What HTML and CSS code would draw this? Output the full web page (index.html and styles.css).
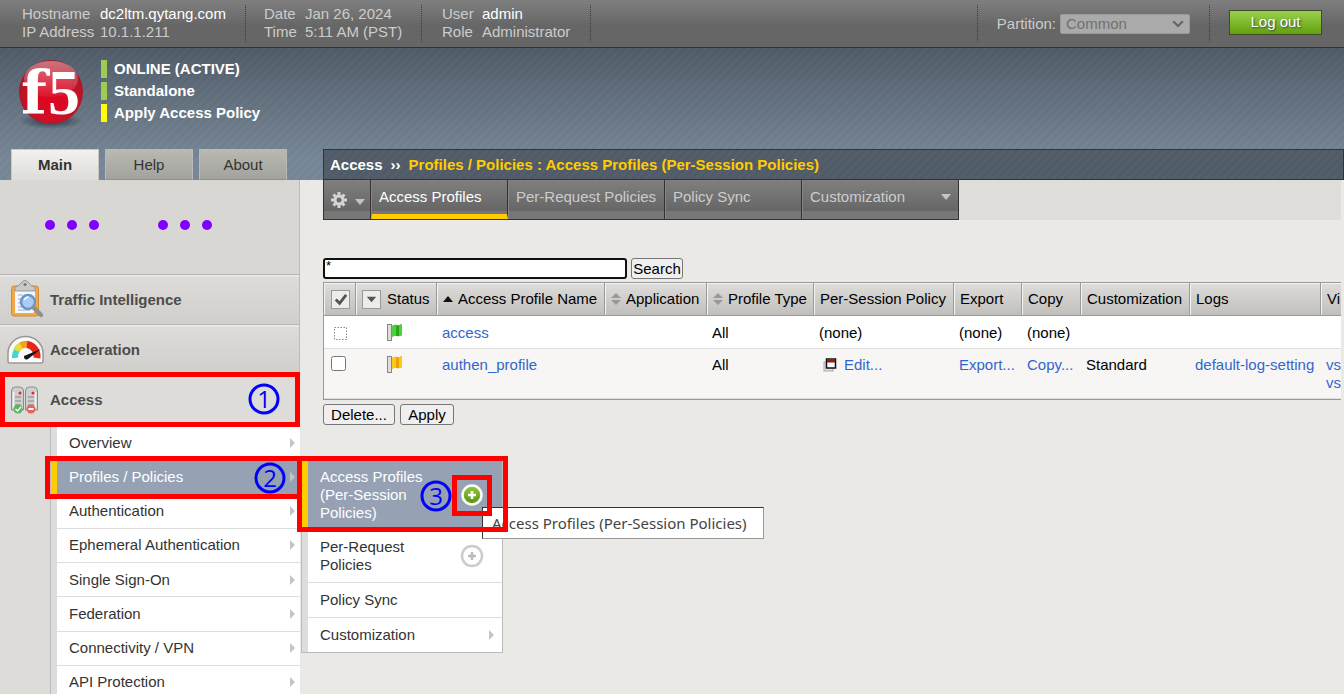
FILE: index.html
```html
<!DOCTYPE html>
<html lang="en">
<head>
<meta charset="utf-8">
<title>BIG-IP - Access Profiles</title>
<link rel="stylesheet" href="styles.css">
</head>
<body>
<header class="topbar">
  <dl class="facts facts-host">
    <dt>Hostname</dt><dd class="bright">dc2ltm.qytang.com</dd>
    <dt>IP Address</dt><dd>10.1.1.211</dd>
  </dl>
  <dl class="facts facts-date">
    <dt>Date</dt><dd>Jan 26, 2024</dd>
    <dt>Time</dt><dd>5:11 AM (PST)</dd>
  </dl>
  <dl class="facts facts-user">
    <dt>User</dt><dd class="bright">admin</dd>
    <dt>Role</dt><dd>Administrator</dd>
  </dl>
  <div class="partition">
    <label for="partition">Partition:</label>
    <span class="select-wrap">
      <select id="partition" disabled><option>Common</option></select>
      <svg class="chevron" width="12" height="8" viewBox="0 0 12 8"><path d="M1.2 1.2 6 6l4.800-4.800" fill="none" stroke="#666" stroke-width="2.200"/></svg>
    </span>
  </div>
  <div class="session"><button type="button" class="logout">Log out</button></div>
</header>

<div class="banner">
  <div class="device">
    <svg class="logo" width="70" height="84" viewBox="0 -7 70 84" role="img" aria-label="F5">
      <defs>
        <radialGradient id="ball" cx="50%" cy="58%" r="56%">
          <stop offset="0" stop-color="#e0051f"/><stop offset=".6" stop-color="#d20f26"/><stop offset="1" stop-color="#a31a28"/>
        </radialGradient>
        <linearGradient id="shine" x1="0" y1="0" x2="0" y2="1">
          <stop offset="0" stop-color="#fff" stop-opacity=".4"/><stop offset="1" stop-color="#fff" stop-opacity="0.050"/>
        </linearGradient>
        <radialGradient id="shade"><stop offset="0" stop-color="#1e2935" stop-opacity=".85"/><stop offset="1" stop-color="#1e2935" stop-opacity="0"/></radialGradient>
      </defs>
      <ellipse cx="35" cy="64" rx="32" ry="8" fill="url(#shade)"/>
      <circle cx="35" cy="35" r="32" fill="url(#ball)"/>
      <ellipse cx="35" cy="22" rx="27" ry="18" fill="url(#shine)"/>
      <text x="5" y="57" class="logo-f">f</text>
      <text x="32" y="57" class="logo-5">5</text>
    </svg>
    <ul class="status">
      <li class="ok">ONLINE (ACTIVE)</li>
      <li class="ok">Standalone</li>
      <li class="warn">Apply Access Policy</li>
    </ul>
  </div>
  <div class="title-row">
    <nav class="side-tabs">
      <a href="#" class="current">Main</a><a href="#">Help</a><a href="#">About</a>
    </nav>
    <h1 class="crumbs"><span>Access</span><span>››</span><span class="where">Profiles / Policies : Access Profiles (Per-Session Policies)</span></h1>
  </div>
</div>

<div class="workspace">
  <aside class="sidebar">
    <div class="dots">
      <div class="trio"><i></i><i></i><i></i></div>
      <div class="trio"><i></i><i></i><i></i></div>
    </div>
    <a href="#" class="module">
      <svg width="44" height="44" viewBox="0 0 44 44">
        <rect x="5.500" y="8" width="27" height="30" rx="2.500" fill="#f0a848" stroke="#d18b33"/>
        <path d="M9 11h20v22l-2 2H9z" fill="#f5f8fc"/>
        <path d="M12 17h5M12 21h3M12 25h3M12 29h6M12 32h12" stroke="#b9c5d8" stroke-width="1.500"/>
        <path d="M9 13V9q5-1 6-4 4-5 8 0 1 3 6 4v4z" fill="#c9c9c9" stroke="#999"/>
        <circle cx="19" cy="6.500" r="1.500" fill="#777"/>
        <circle cx="22" cy="24" r="7" fill="#a9cdf5" stroke="#6e93c9" stroke-width="2.500"/>
        <path d="M18.500 22q1-3 4-3" stroke="#fff" stroke-width="1.500" fill="none"/>
        <path d="m28 30 7 7" stroke="#8f8f8f" stroke-width="4.500" stroke-linecap="round"/>
      </svg>
      <span>Traffic Intelligence</span>
    </a>
    <a href="#" class="module">
      <svg width="44" height="44" viewBox="0 0 44 44">
        <path d="M2 33V25a17.500 16.500 0 0 1 35 0v8q0 2-2 2H4q-2 0-2-2z" fill="#fafafa" stroke="#999" stroke-width="1.500"/>
        <path d="M9 30a10.500 11 0 0 1 3-9" stroke="#48d6cf" stroke-width="6" fill="none"/>
        <path d="M10.500 22.500a10.500 10.500 0 0 1 6-5.500" stroke="#e7dc3b" stroke-width="7" fill="none"/>
        <path d="M15 17.500a11 11 0 0 1 7-1" stroke="#f5a11c" stroke-width="7" fill="none"/>
        <path d="M21 16.500a11 12 0 0 1 10 13.500" stroke="#e8251b" stroke-width="7" fill="none"/>
        <path d="m18 28 17-7-13 10q-4 2-4-3z" fill="#151515"/>
      </svg>
      <span>Acceleration</span>
    </a>
    <div class="module-open">
      <a href="#" class="module module-access">
        <svg width="44" height="44" viewBox="0 0 44 44">
          <g stroke="#8b8b8b" fill="#cfcfcf">
            <path d="M5.500 32V13q0-4 4-4h4q4 0 4 4v19z"/><path d="M19.500 32V13q0-4 4-4h4q4 0 4 4v19z"/>
          </g>
          <path d="M7.500 14v16M29.500 14v16" stroke="#f3f3f3" stroke-width="1.500"/>
          <path d="M9 19h6M9 23h6M9 27h6M22 19h6M22 23h6M22 27h6" stroke="#888"/>
          <circle cx="14" cy="15" r="1.500" fill="#ec2525"/><circle cx="27" cy="15" r="1.500" fill="#ec2525"/>
          <circle cx="12" cy="31" r="4.500" fill="#56b65a"/><path d="m9.500 31 2 2 3.500-4" stroke="#fff" stroke-width="1.500" fill="none"/>
          <circle cx="25" cy="31" r="4.500" fill="#e76560"/><path d="M22.500 31h5" stroke="#fff" stroke-width="2"/>
        </svg>
        <span>Access</span>
      </a>
      <div class="mark mark-module"></div>
      <svg class="step step-one" width="32" height="32" viewBox="0 0 32 32"><circle cx="16" cy="16" r="14"/><text x="16" y="25">1</text></svg>
    </div>
    <ul class="submenu">
      <li><a href="#">Overview</a></li>
      <li class="active">
        <a href="#">Profiles / Policies</a>
        <div class="mark mark-item"></div>
        <svg class="step step-two" width="32" height="32" viewBox="0 0 32 32"><circle cx="16" cy="16" r="14"/><text x="16" y="25">2</text></svg>
        <div class="flyout">
          <ul>
            <li class="active"><a href="#">Access Profiles (Per-Session Policies)</a>
              <button type="button" class="add" aria-label="Create">
                <svg width="24" height="24" viewBox="0 0 24 24"><defs><linearGradient id="go" x1="0" y1="0" x2="0" y2="1"><stop offset="0" stop-color="#94c83d"/><stop offset="1" stop-color="#57930d"/></linearGradient></defs><circle cx="12" cy="12" r="9.500" fill="url(#go)" stroke="#fff" stroke-width="2.500"/><path d="M12 8v8M8 12h8" stroke="#fff" stroke-width="2.500"/></svg>
              </button>
            </li>
            <li><a href="#">Per-Request Policies</a>
              <button type="button" class="add" aria-label="Create">
                <svg width="24" height="24" viewBox="0 0 24 24"><circle cx="12" cy="12" r="10" fill="#fff" stroke="#ccc" stroke-width="2.500"/><path d="M12 8v8M8 12h8" stroke="#bbb" stroke-width="2.500"/></svg>
              </button>
            </li>
            <li><a href="#">Policy Sync</a></li>
            <li class="more"><a href="#">Customization</a></li>
          </ul>
          <div class="tooltip" role="tooltip">Access Profiles (Per-Session Policies)</div>
          <div class="mark mark-fly"></div>
          <div class="mark mark-add"></div>
          <svg class="step step-three" width="32" height="32" viewBox="0 0 32 32"><circle cx="16" cy="16" r="14"/><text x="16" y="25">3</text></svg>
        </div>
      </li>
      <li><a href="#">Authentication</a></li>
      <li><a href="#">Ephemeral Authentication</a></li>
      <li><a href="#">Single Sign-On</a></li>
      <li><a href="#">Federation</a></li>
      <li><a href="#">Connectivity / VPN</a></li>
      <li><a href="#">API Protection</a></li>
    </ul>
  </aside>

  <main class="content">
    <div class="tabstrip">
      <nav class="page-tabs">
        <button type="button" class="gear" aria-label="Preferences">
          <svg width="16" height="16" viewBox="0 0 16 16"><g stroke="#d4d4d4" stroke-width="3"><path d="M8 0v16M0 8h16M2.500 2.500l11 11M13.500 2.500l-11 11"/></g><circle cx="8" cy="8" r="5.500" fill="#d4d4d4"/><circle cx="8" cy="8" r="2.500" fill="#6c6c6c"/></svg>
          <svg width="10" height="6" viewBox="0 0 10 6"><path d="M0 0h10L5 6z" fill="#c4c4c4"/></svg>
        </button>
        <a href="#" class="current">Access Profiles</a>
        <a href="#" class="wide">Per-Request Policies</a>
        <a href="#">Policy Sync</a>
        <a href="#" class="wide drop">Customization
          <svg width="10" height="6" viewBox="0 0 10 6"><path d="M0 0h10L5 6z" fill="#c4c4c4"/></svg>
        </a>
      </nav>
    </div>

    <form class="search">
      <input type="text" value="*" aria-label="Search profiles">
      <button type="button">Search</button>
    </form>

    <div class="table-wrap">
      <table>
        <colgroup><col class="c-check"><col class="c-status"><col class="c-name"><col class="c-app"><col class="c-type"><col class="c-policy"><col class="c-export"><col class="c-copy"><col class="c-custom"><col class="c-logs"><col></colgroup>
        <thead>
          <tr>
            <th class="check"><button type="button" class="tile" aria-label="Select all"><svg width="18" height="18" viewBox="0 0 18 18"><path d="m4 9 4 4 7-9" fill="none" stroke="#555" stroke-width="3"/></svg></button></th>
            <th><div class="head"><button type="button" class="tile" aria-label="Filter status"><svg width="18" height="18" viewBox="0 0 18 18"><path d="M4 6h10l-5 6z" fill="#555"/></svg></button>Status</div></th>
            <th><div class="head sort"><svg width="10" height="6" viewBox="0 0 10 6"><path d="M0 6h10L5 0z" fill="#111"/></svg>Access Profile Name</div></th>
            <th><div class="head sort"><svg width="10" height="12" viewBox="0 0 10 12"><path d="M0 5h10L5 0zM0 7h10l-5 5z" fill="#999"/></svg>Application</div></th>
            <th><div class="head sort"><svg width="10" height="12" viewBox="0 0 10 12"><path d="M0 5h10L5 0zM0 7h10l-5 5z" fill="#999"/></svg>Profile Type</div></th>
            <th>Per-Session Policy</th><th>Export</th><th>Copy</th><th>Customization</th><th>Logs</th><th>Vi</th>
          </tr>
        </thead>
        <tbody>
          <tr>
            <td class="check"><svg width="13" height="13" viewBox="0 0 13 13"><rect x=".5" y=".5" width="12" height="12" fill="none" stroke="#888" stroke-dasharray="1.500 1.500"/></svg></td>
            <td class="flag"><svg width="16" height="18" viewBox="0 0 16 18"><rect x=".5" y=".5" width="4" height="16" fill="#ddd" stroke="#888"/><path d="M5 2q3-2 5-1t5-1v11q-3 2-5 1t-5 1z" fill="#27a818"/><path d="M5 2q3-2 4-1v11H5zM12 1l3-1v11l-3 1z" fill="#4cd23b"/></svg></td>
            <td><a href="#">access</a></td><td></td><td>All</td><td>(none)</td><td>(none)</td><td>(none)</td><td></td><td></td><td></td>
          </tr>
          <tr class="alt">
            <td class="check"><input type="checkbox" aria-label="Select authen_profile"></td>
            <td class="flag"><svg width="16" height="18" viewBox="0 0 16 18"><rect x=".5" y=".5" width="4" height="16" fill="#ddd" stroke="#888"/><path d="M5 2q3-2 5-1t5-1v11q-3 2-5 1t-5 1z" fill="#e9a300"/><path d="M5 2q3-2 4-1v11H5zM12 1l3-1v11l-3 1z" fill="#fcc91a"/></svg></td>
            <td><a href="#">authen_profile</a></td><td></td><td>All</td>
            <td><a href="#" class="edit"><svg width="14" height="14" viewBox="0 0 14 14"><rect x="1" y="4" width="9" height="9" fill="#ddd" stroke="#aaa"/><rect x="3.500" y="1" width="9" height="9" fill="#fff" stroke="#111" stroke-width="1.500"/><path d="M4 1.500h8v3H4z" fill="#8c2013"/></svg>Edit...</a></td>
            <td><a href="#">Export...</a></td><td><a href="#">Copy...</a></td><td>Standard</td><td><a href="#">default-log-setting</a></td><td><a href="#">vs</a><br><a href="#">vs</a></td>
          </tr>
        </tbody>
      </table>
    </div>
    <div class="actions"><button type="button" class="delete">Delete...</button><button type="button" class="apply">Apply</button></div>
  </main>
</div>
</body>
</html>
```
FILE: styles.css
```css
* { box-sizing: border-box; }
body {
  margin: 0;
  min-height: 100vh;
  display: flex;
  flex-direction: column;
  background: #eae9e5;
  color: #000;
  font: 15px/18px "Liberation Sans", Arial, sans-serif;
  overflow: hidden;
}
a { color: #3366cc; text-decoration: none; }
ul, dl, h1 { margin: 0; padding: 0; list-style: none; }
button, input, select { font: inherit; margin: 0; }
svg { display: block; flex: none; }

.topbar {
  display: flex;
  height: 48px;
  padding: 5px 22px;
  background: linear-gradient(#7f7f7f, #666 55%, #666);
  border-bottom: 1px solid #333;
  color: #ccc;
}
.facts {
  display: grid;
  align-content: start;
  border-right: 1px dotted #3c3c3c;
  white-space: nowrap;
}
.facts dd { margin: 0; }
.facts .bright { color: #fff; }
.facts-host { grid-template-columns: 78px 145px; }
.facts-date { grid-template-columns: 41px 116px; padding-left: 18px; }
.facts-user { grid-template-columns: 40px 108px; padding-left: 20px; }
.partition {
  display: flex;
  align-items: center;
  gap: 4px;
  margin-left: auto;
  padding: 0 19px;
  border: 1px dotted #3c3c3c;
  border-width: 0 1px;
}
.select-wrap { position: relative; }
.partition select {
  display: block;
  appearance: none;
  width: 130px;
  height: 20px;
  padding: 0 5px;
  border: 1px solid #999;
  border-radius: 2px;
  background: #aaa;
  color: #707070;
  opacity: 1;
}
.chevron { position: absolute; right: 6px; top: 6px; }
.session { padding: 5px 0 0 19px; }
.logout {
  width: 93px;
  height: 25px;
  padding: 0 0 2px;
  border: 1px solid #3f4b2c;
  background: linear-gradient(#9bcf4d, #62a10c);
  color: #fff;
  text-shadow: 1px 1px 2px #345;
}

.banner {
  background:
    repeating-linear-gradient(135deg, rgba(255,255,255,.015) 0 3px, rgba(0,0,0,.015) 3px 6px),
    linear-gradient(#505b68, #64717f 40%, #778797 85%, #778797);
}
.device { display: flex; height: 101px; padding: 2px 16px; }
.logo-f, .logo-5 { font-weight: bold; fill: #fff; }
.logo-f { font-family: "DejaVu Serif", serif; font-size: 60px; }
.logo-5 { font-family: "Liberation Serif", serif; font-size: 64px; }
.status { display: grid; align-content: start; gap: 4px; padding: 10px 0 0 15px; }
.status li { padding-left: 7px; border-left: 6px solid #9bcd55; color: #fff; font-weight: bold; }
.status .warn { border-color: #ff0; }

.title-row { display: grid; grid-template-columns: 323px 1fr; height: 31px; }
.side-tabs { display: flex; gap: 6px; padding-left: 11px; }
.side-tabs a {
  width: 88px;
  padding-top: 6px;
  border: 1px solid #bbbab5;
  border-bottom-color: #8e8e8a;
  background: linear-gradient(#b9b9b4, #a3a39e);
  color: #333;
  text-align: center;
}
.side-tabs .current { background: linear-gradient(#f1f1ee, #dddcd8); border-color: #c8c8c8; border-bottom: 0; font-weight: bold; }
.crumbs {
  display: flex;
  gap: 8px;
  height: 31px;
  padding: 6px;
  border: 1px solid #333;
  background: repeating-linear-gradient(135deg, rgba(255,255,255,.015) 0 3px, rgba(0,0,0,.015) 3px 6px), #515c69;
  color: #fff;
  font: bold 15px/18px "Liberation Sans", Arial, sans-serif;
  white-space: nowrap;
}
.crumbs .where { color: #fc0; }

.workspace { flex: 1; display: grid; grid-template-columns: 300px minmax(0, 1fr); }
.sidebar { background: #dddcd8; border-right: 1px solid #bbb; z-index: 1; }
.dots { display: flex; gap: 60px; height: 94px; padding: 40px 45px; background: #d8d7d3; }
.trio { display: flex; gap: 12px; }
.trio:first-child { margin-right: -1px; }
.trio i { width: 10px; height: 10px; border-radius: 50%; background: #8000ff; }
.module {
  display: flex;
  align-items: center;
  height: 50px;
  padding-left: 6px;
  border-top: 1px solid #b9b9bb;
  box-shadow: inset 0 2px #e7e6e4;
  background: linear-gradient(#dddcd8, #d0cfcb);
  color: #4c4c4c;
  font-weight: bold;
}
.module-open { position: relative; z-index: 1; }
.module-access { height: 52px; padding-bottom: 2px; background: #dddcd8; }

.submenu { display: grid; grid-auto-rows: 1fr; height: 274px; margin: 0 -1px 0 50px; border-left: 1px solid #bbb; }
.submenu > li { position: relative; border-left: 6px solid #ddd; border-bottom: 1px solid #ddd; background: #fff; }
.submenu > li > a { display: flex; align-items: center; height: 100%; padding-left: 12px; color: #333; }
.submenu > li > a::after, .flyout .more::after {
  content: "";
  margin: 0 5px 0 auto;
  border: 5px solid transparent;
  border-left-color: #c4c4c4;
  border-right: 0;
}
.submenu > .active { z-index: 2; border-left-color: #fc0; background: #96a2b4; border-bottom-color: #96a2b4; }
.submenu > .active > a { color: #fff; }

.flyout { position: absolute; left: 244px; top: 0; width: 202px; border: 1px solid #bbb; background: #fff; }
.flyout li { display: flex; align-items: center; min-height: 34px; padding: 8px 3px 8px 12px; border-left: 6px solid #ddd; border-bottom: 1px solid #ddd; }
.flyout li:last-child { border-bottom: 0; }
.flyout li a { width: 112px; color: #333; }
.flyout li .add { margin: 0 15px 0 auto; padding: 0; border: 0; background: none; }
.flyout li.active { padding-top: 7px; border-color: #fc0; border-bottom: 0; background: #96a2b4; }
.flyout li.active a { color: #fff; }

.tooltip {
  position: absolute;
  left: 180px;
  top: 46px;
  padding: 6px 16px 6px 9px;
  border: 1px solid #999;
  border-top-color: #333;
  border-left-color: #333;
  background: #fff;
  color: #444;
  font: 15px/18px "Noto Sans", sans-serif;
  white-space: nowrap;
}
.mark { position: absolute; border: 5px solid #f00; pointer-events: none; }
.mark-module { inset: -2px -1px -1px 0; }
.mark-item { inset: -4px -2px -5px -12px; }
.mark-fly { left: -5px; top: -5px; width: 211px; height: 76px; }
.mark-add { left: 150px; top: 14px; width: 40px; height: 41px; }
.step { position: absolute; }
.step circle { fill: none; stroke: #00f; stroke-width: 3px; }
.step text { fill: #00f; font: 24px "Open Sans", sans-serif; text-anchor: middle; }
.step-one { left: 248px; top: 9px; }
.step-two { left: 197px; top: 2px; }
.step-three { left: 118px; top: 19px; }

.content { padding: 0 3px 0 23px; }
.tabstrip { display: flex; background: #deddd9; margin-bottom: 38px; }
.page-tabs { display: flex; height: 40px; border: 1px solid #333; border-top: 0; background: linear-gradient(#7f7f7f, #666 80%, #777 80%); }
.page-tabs a { width: 137px; padding: 8px 7px; border-right: 1px solid #333; border-left: 1px solid #858585; color: #ccc; white-space: nowrap; }
.page-tabs .wide { width: 157px; }
.page-tabs .current { color: #fff; border-bottom: 5px solid #fc0; }
.page-tabs .drop { display: flex; justify-content: space-between; width: 156px; border-right: 0; }
.page-tabs .drop svg { margin-top: 6px; }
.gear { display: flex; align-items: center; gap: 8px; width: 47px; padding: 0 7px; border: 0; border-right: 1px solid #333; background: none; }
.gear svg:last-child { margin-top: 4px; }

.search { display: flex; gap: 4px; margin-bottom: 3px; }
.search input { width: 304px; height: 21px; padding: 0 1px 6px; border: 2px solid #101010; border-radius: 3px; outline: 0; font-size: 13px; line-height: 13px; }
.search button, .actions button { height: 21px; padding: 0; border: 1px solid #777; border-radius: 3px; background: #efefef; }
.search button { width: 52px; }

.table-wrap { overflow: hidden; border: 1px solid #999; border-right: 0; }
table { width: 100%; table-layout: fixed; border-collapse: separate; border-spacing: 0; background: #fff; white-space: nowrap; }
.c-check { width: 32px; } .c-status { width: 81px; } .c-name { width: 168px; } .c-app { width: 102px; }
.c-type { width: 107px; } .c-policy { width: 140px; } .c-export { width: 68px; } .c-copy { width: 59px; }
.c-custom { width: 109px; } .c-logs { width: 131px; }
th {
  height: 33px;
  padding: 0 0 0 6px;
  border-right: 1px solid #999;
  border-bottom: 1px solid #999;
  box-shadow: inset 1px 1px #f4f4f2;
  background: linear-gradient(#dedddb, #c0bfbb);
  font-weight: normal;
  text-align: left;
}
th:last-child { border-right: 0; }
.head { display: flex; align-items: center; gap: 6px; }
.sort { gap: 5px; }
.tile { display: block; width: 19px; height: 19px; padding: 0; border: 1px solid #999; background: #ececea; }
.tile svg { width: 17px; height: 17px; }
td { padding: 8px 0 6px 5px; vertical-align: top; border-bottom: 1px solid #ddd; }
.alt td { padding-top: 7px; background: #f7f6f5; }
th.check, td.check, .alt td.check { padding-left: 7px; }
td.check svg { margin: 3px 3px 0; }
td.check input { display: block; width: 15px; height: 15px; margin: 0; }
td.flag, .alt td.flag { padding-left: 31px; }
.edit { display: flex; align-items: center; gap: 7px; padding-left: 4px; }
.actions { display: flex; gap: 5px; padding-top: 4px; }
.delete { width: 72px; } .apply { width: 54px; }
```
